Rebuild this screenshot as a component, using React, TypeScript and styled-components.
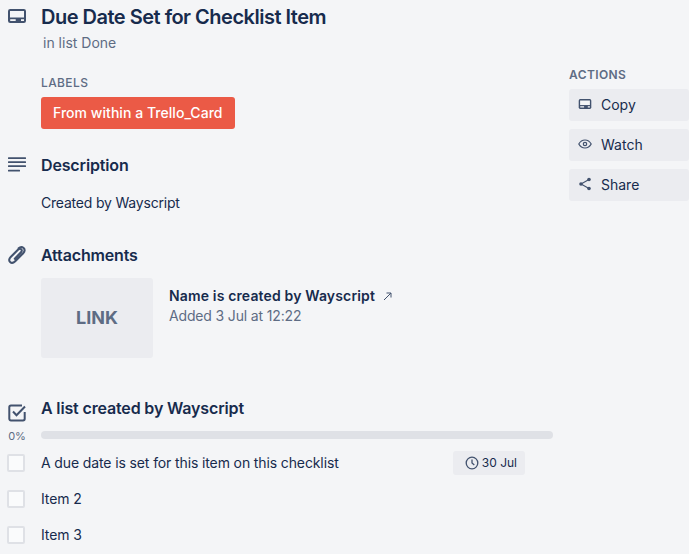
import React from 'react';
import styled, { createGlobalStyle } from 'styled-components';

const GlobalStyle = createGlobalStyle`
  html, body {
    margin: 0;
    height: 100%;
    overflow: hidden;
    background: #f4f5f7;
    font-family: Inter, 'Liberation Sans', sans-serif;
    color: #172b4d;
  }
`;

const Page = styled.div`
  display: grid;
  grid-template-columns: 553px 120px;
  column-gap: 16px;
  width: 689px;
  height: 554px;
  overflow: hidden;
`;

const Main = styled.main`
  display: flex;
  flex-direction: column;
`;

const Section = styled.section<{ $top: number }>`
  position: relative;
  padding-left: 41px;
  margin-top: ${(p) => p.$top}px;
`;

const SectionIcon = styled.span<{ $top?: number }>`
  position: absolute;
  left: 7px;
  top: ${(p) => p.$top ?? 0}px;
  width: 20px;
  height: 20px;
  color: #42526e;
  display: flex;
`;

const CardTitle = styled.h1`
  margin: 0;
  font-size: 20px;
  line-height: 24px;
  font-weight: 600;
  letter-spacing: -0.5px;
`;

const InList = styled.p`
  margin: 4px 0 0 2px;
  font-size: 14px;
  line-height: 20px;
  color: #5e6c84;
`;

const SmallHeading = styled.h3`
  margin: 0;
  font-size: 12px;
  line-height: 16px;
  font-weight: 500;
  letter-spacing: 0.4px;
  color: #5e6c84;
`;

const Label = styled.div`
  display: inline-block;
  margin-top: 6px;
  height: 32px;
  line-height: 32px;
  padding: 0 12px;
  border-radius: 3px;
  background: #eb5a46;
  color: #fff;
  font-size: 14px;
  font-weight: 500;
  letter-spacing: 0.04px;
`;

const LabelBlock = styled.div`
  display: flex;
  flex-direction: column;
  align-items: flex-start;
  margin-top: 22px;
`;

const Heading = styled.h2`
  margin: 0;
  font-size: 16px;
  line-height: 20px;
  font-weight: 600;
  letter-spacing: -0.15px;
`;

const Body = styled.p`
  margin: 18px 0 0;
  font-size: 14px;
  line-height: 20px;
  letter-spacing: -0.2px;
`;

const Attachment = styled.div`
  display: flex;
  margin-top: 13px;
  gap: 16px;
`;

const Thumb = styled.div`
  width: 112px;
  height: 80px;
  padding-bottom: 2px;
  box-sizing: border-box;
  border-radius: 3px;
  background: #ebecf0;
  color: #5e6c84;
  font-size: 18px;
  font-weight: 700;
  display: flex;
  align-items: center;
  justify-content: center;
`;

const AttachmentInfo = styled.div`
  display: flex;
  flex-direction: column;
  padding-top: 8px;
`;

const AttachmentName = styled.div`
  display: flex;
  align-items: center;
  gap: 8px;
  font-size: 14px;
  line-height: 20px;
  font-weight: 600;
  letter-spacing: 0.15px;
`;

const AttachmentMeta = styled.div`
  font-size: 14px;
  line-height: 20px;
  letter-spacing: -0.15px;
  color: #5e6c84;
`;

const Percent = styled.span`
  position: absolute;
  left: 0;
  top: 31px;
  width: 34px;
  text-align: center;
  font-size: 11px;
  line-height: 14px;
  color: #5e6c84;
`;

const Progress = styled.div`
  height: 8px;
  margin-top: 13px;
  border-radius: 4px;
  background: #dfe1e6;
`;

const ItemList = styled.ul`
  list-style: none;
  margin: 6px 0 0;
  padding: 0;
`;

const Item = styled.li`
  position: relative;
  display: flex;
  align-items: center;
  justify-content: space-between;
  height: 36px;
  padding-right: 28px;
  font-size: 14px;
  line-height: 34px;
  letter-spacing: -0.12px;
`;

const Checkbox = styled.span`
  position: absolute;
  left: -34px;
  top: 9px;
  width: 18px;
  height: 18px;
  box-sizing: border-box;
  border: 2px solid #dfe1e6;
  border-radius: 2px;
  background: #fafbfc;
`;

const DateBadge = styled.span`
  display: flex;
  align-items: center;
  gap: 3px;
  height: 24px;
  padding: 0 8px 0 12px;
  border-radius: 3px;
  background: #ebecf0;
  font-size: 12px;
  letter-spacing: 0;
  color: #172b4d;
`;

const Sidebar = styled.aside`
  display: flex;
  flex-direction: column;
  padding-top: 67px;
`;

const ActionsHeading = styled(SmallHeading)`
  font-weight: 600;
  margin-bottom: 6px;
`;

const ActionButton = styled.button`
  display: flex;
  align-items: center;
  gap: 9px;
  height: 32px;
  margin-bottom: 8px;
  padding: 0 0 2px 9px;
  border: none;
  border-radius: 3px;
  background: #ebecf0;
  color: #172b4d;
  font: inherit;
  font-size: 14px;
  text-align: left;
`;

const Glyph = styled.svg`
  flex: none;
  color: #42526e;
`;

const CardIcon = ({ size }: { size: number }) => (
  <Glyph width={size} height={size} viewBox="0 0 20 20" fill="none">
    <rect x="1" y="3" width="18" height="14" rx="2.2" fill="currentColor" />
    <rect x="3" y="5" width="14" height="6.5" fill="#f4f5f7" />
    <rect x="3.200" y="13.200" width="5.500" height="1.800" fill="#f4f5f7" />
    <rect x="14" y="13.200" width="3" height="1.800" fill="#f4f5f7" />
  </Glyph>
);

const LinesIcon = () => (
  <Glyph width="20" height="20" viewBox="0 0 20 20" fill="currentColor">
    <rect x="1" y="2.200" width="18" height="1.800" rx="0.5" />
    <rect x="1" y="6.200" width="18" height="1.800" rx="0.5" />
    <rect x="1" y="10.200" width="18" height="1.800" rx="0.5" />
    <rect x="1" y="14.800" width="12" height="1.800" rx="0.5" />
  </Glyph>
);

const ClipIcon = () => (
  <Glyph width="20" height="20" viewBox="0 0 20 20" fill="none" stroke="currentColor" strokeWidth="2.100" strokeLinecap="round">
    <path d="M7.800 13.800L14 7.200c1.100-1.200 1-2.300.2-3-.9-.8-2-.6-3 .4L3.700 12c-1.900 1.900-1.900 3.900-.6 5.100 1.300 1.200 3.300 1 5.100-.8l8-8.100c1.800-1.900 1.800-3.900.4-5.200-1.400-1.300-3.400-1.200-5 .2" />
  </Glyph>
);

const CheckIcon = () => (
  <Glyph width="20" height="20" viewBox="0 0 20 20" fill="none">
    <path d="M15 2.500H4a1.700 1.700 0 0 0-1.700 1.700v11.600A1.700 1.700 0 0 0 4 17.500h12a1.700 1.700 0 0 0 1.700-1.700V9" stroke="currentColor" strokeWidth="2" />
    <path d="M6 8.500l3.500 3.700L18 3.500" stroke="currentColor" strokeWidth="2" />
  </Glyph>
);

const EyeIcon = () => (
  <Glyph width="14" height="14" viewBox="0 0 14 14" fill="none" stroke="currentColor" strokeWidth="1.200">
    <path d="M.8 7C2.200 4.500 4.400 3 7 3s4.800 1.500 6.200 4C11.800 9.500 9.600 11 7 11S2.200 9.500.8 7z" />
    <circle cx="7" cy="7" r="1.700" />
  </Glyph>
);

const ShareIcon = () => (
  <Glyph width="14" height="14" viewBox="0 0 14 14" fill="currentColor">
    <path d="M11 2.500L3 7l8 4.500" fill="none" stroke="currentColor" strokeWidth="1.100" />
    <circle cx="11" cy="2.500" r="1.800" />
    <circle cx="3" cy="7" r="1.800" />
    <circle cx="11" cy="11.500" r="1.800" />
  </Glyph>
);

const ClockIcon = () => (
  <Glyph width="14" height="14" viewBox="0 0 14 14" fill="none" stroke="currentColor" strokeWidth="1.300">
    <circle cx="7" cy="7" r="5.800" />
    <path d="M7 3.500V7l2.300 2" />
  </Glyph>
);

const ArrowIcon = () => (
  <Glyph width="9" height="9" viewBox="0 0 9 9" fill="none" stroke="currentColor" strokeWidth="1">
    <path d="M1 8L8 1M3.500 1H8v4.500" />
  </Glyph>
);

const actions = [
  { name: 'Copy', icon: <CardIcon size={14} /> },
  { name: 'Watch', icon: <EyeIcon /> },
  { name: 'Share', icon: <ShareIcon /> },
];

const App = (): React.ReactElement => (
  <>
    <GlobalStyle />
    <Page>
      <Main>
        <Section $top={5}>
          <SectionIcon $top={1}>
            <CardIcon size={20} />
          </SectionIcon>
          <CardTitle>Due Date Set for Checklist Item</CardTitle>
          <InList>in list Done</InList>
          <LabelBlock>
            <SmallHeading>LABELS</SmallHeading>
            <Label>From within a Trello_Card</Label>
          </LabelBlock>
        </Section>

        <Section $top={26}>
          <SectionIcon>
            <LinesIcon />
          </SectionIcon>
          <Heading>Description</Heading>
          <Body>Created by Wayscript</Body>
        </Section>

        <Section $top={32}>
          <SectionIcon>
            <ClipIcon />
          </SectionIcon>
          <Heading>Attachments</Heading>
          <Attachment>
            <Thumb>LINK</Thumb>
            <AttachmentInfo>
              <AttachmentName>
                Name is created by Wayscript <ArrowIcon />
              </AttachmentName>
              <AttachmentMeta>Added 3 Jul at 12:22</AttachmentMeta>
            </AttachmentInfo>
          </Attachment>
        </Section>

        <Section $top={40}>
          <SectionIcon $top={5}>
            <CheckIcon />
          </SectionIcon>
          <Percent>0%</Percent>
          <Heading>A list created by Wayscript</Heading>
          <Progress />
          <ItemList>
            <Item>
              <Checkbox />
              A due date is set for this item on this checklist
              <DateBadge>
                <ClockIcon /> 30 Jul
              </DateBadge>
            </Item>
            <Item>
              <Checkbox />
              Item 2
            </Item>
            <Item>
              <Checkbox />
              Item 3
            </Item>
          </ItemList>
        </Section>
      </Main>

      <Sidebar>
        <ActionsHeading>ACTIONS</ActionsHeading>
        {actions.map((action) => (
          <ActionButton key={action.name}>
            {action.icon}
            {action.name}
          </ActionButton>
        ))}
      </Sidebar>
    </Page>
  </>
);

export default App;
